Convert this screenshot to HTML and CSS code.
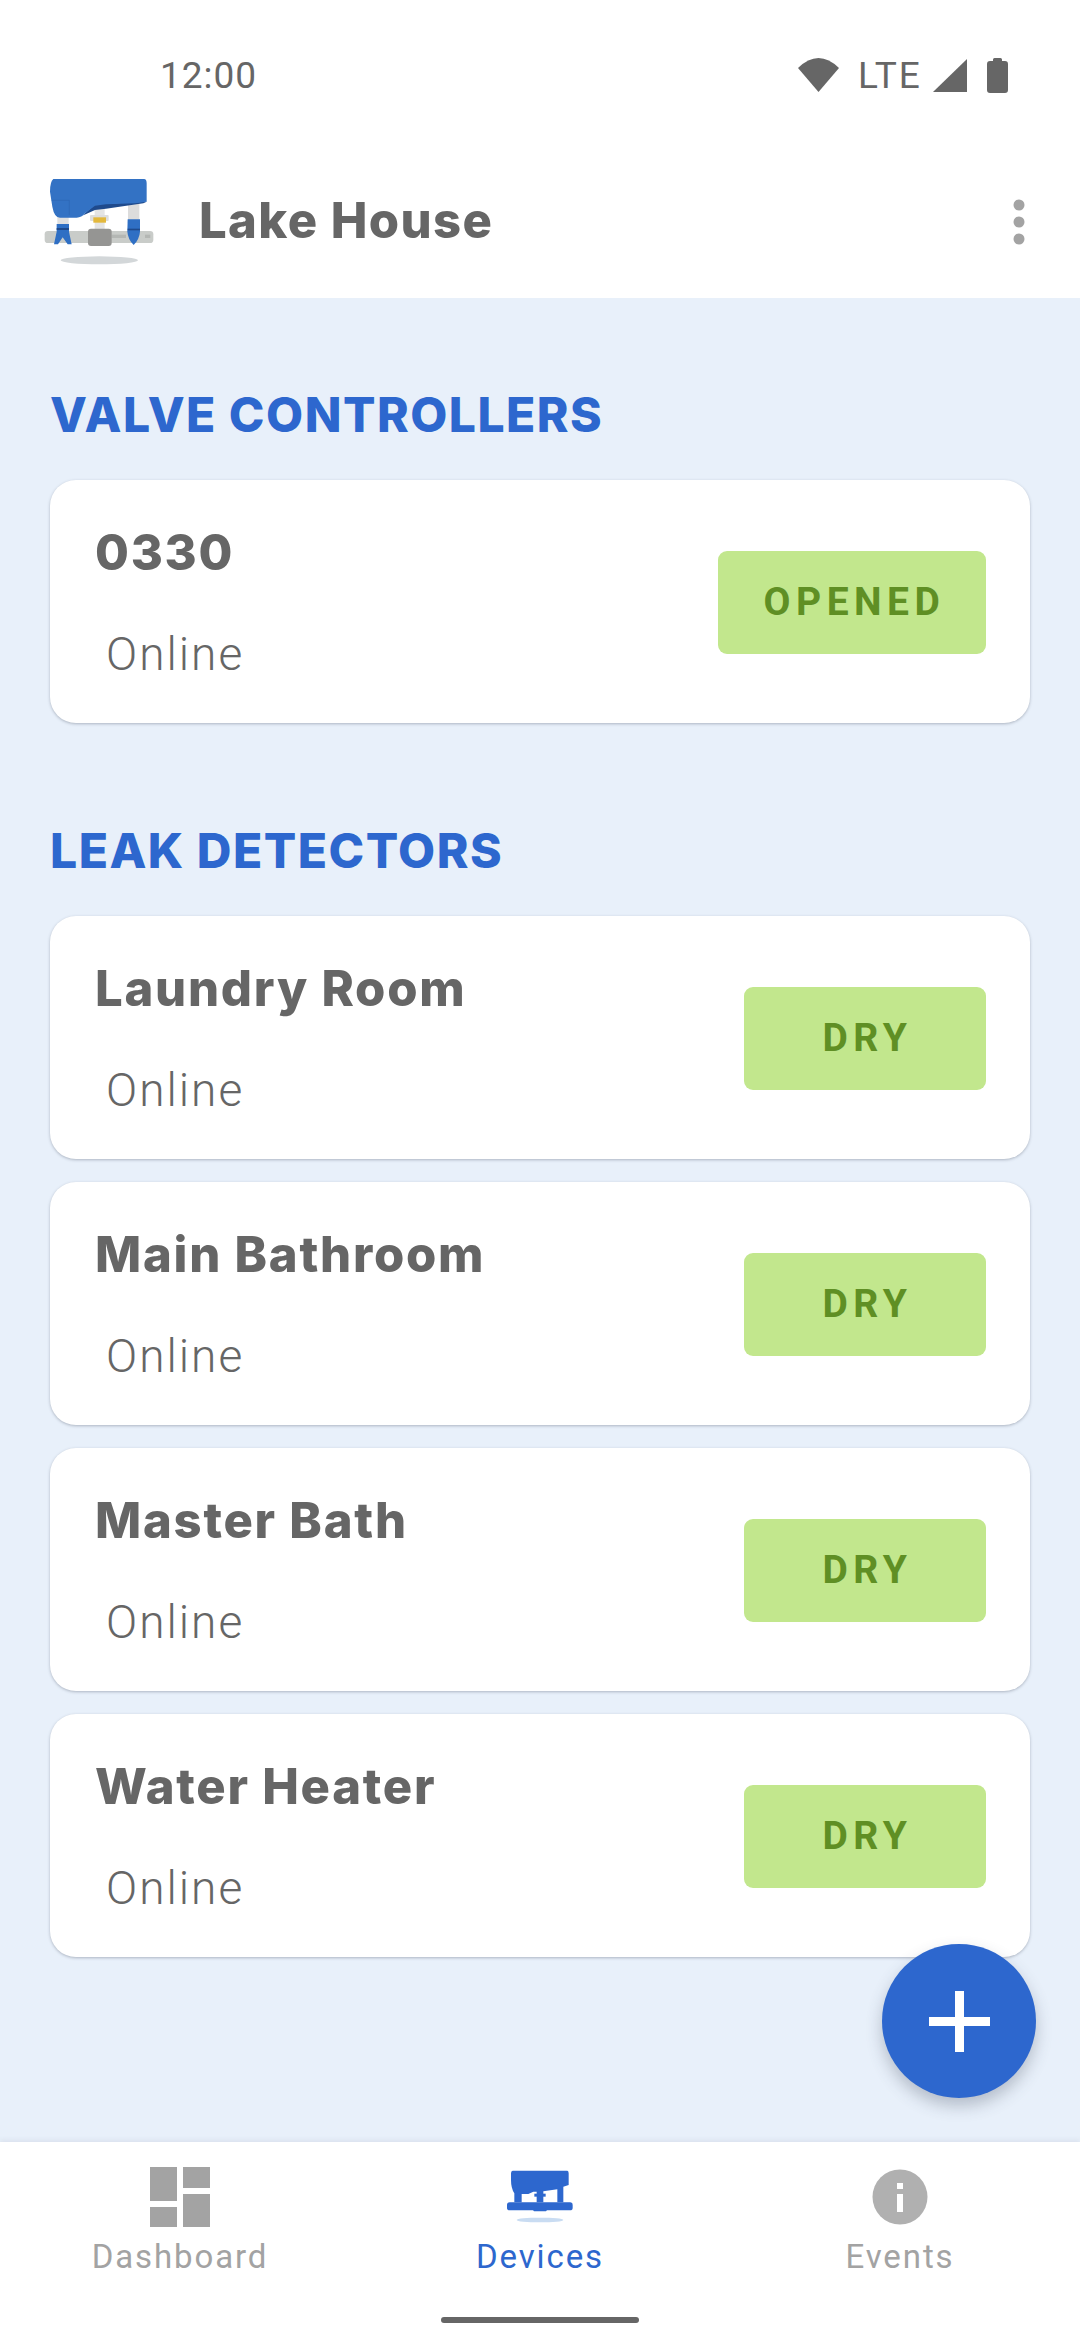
FILE: index.html
```html
<!DOCTYPE html>
<html lang="en">
<head>
<meta charset="utf-8">
<title>Lake House</title>
<link rel="stylesheet" href="styles.css">
</head>
<body>
<div class="app">
  <div class="status">
    <span class="time">12:00</span>
    <div class="status-icons">
      <svg class="ic-wifi" width="41" height="34" viewBox="0 0 41 34"><path d="M0 10Q20.500 -10 41 10L20.500 34Z" fill="#666"/></svg>
      <span class="lte">LTE</span>
      <svg class="ic-signal" width="34" height="33" viewBox="0 0 34 33"><path d="M34 0V33H0Z" fill="#666"/></svg>
      <svg class="ic-batt" width="21" height="35" viewBox="0 0 21 35"><path d="M6 3V1.500Q6 0 7.500 0H13.500Q15 0 15 1.500V3H18Q21 3 21 6V32Q21 35 18 35H3Q0 35 0 32V6Q0 3 3 3Z" fill="#666"/></svg>
    </div>
  </div>
  <header class="appbar">
    <svg class="logo" width="160" height="130" viewBox="0 0 480 390">
      <rect x="74" y="243" width="326" height="36" rx="10" fill="#c9ccc9"/>
      <rect x="275" y="254" width="43" height="10" fill="#b4b7b4"/>
      <rect x="375" y="254" width="16" height="10" fill="#b4b7b4"/>
      <rect x="112" y="195" width="34" height="40" fill="#e0e0e0"/>
      <rect x="324" y="160" width="34" height="52" fill="#dcdcdc"/>
      <rect x="224" y="165" width="30" height="75" fill="#e4e4e4"/>
      <rect x="210" y="195" width="56" height="18" rx="3" fill="#dedede"/>
      <rect x="220" y="202" width="38" height="16" fill="#e3b83c"/>
      <rect x="204" y="236" width="71" height="52" rx="9" fill="#959593"/>
      <path d="M110 222H147V245L155 283H143L128 262L114 283H102L110 245Z" fill="#2f6fc4"/>
      <rect x="110" y="234" width="37" height="6" fill="#1f4a8c"/>
      <path d="M323 208H360V245Q358 268 341 285Q324 268 322 245Z" fill="#2f6fc4"/>
      <rect x="323" y="236" width="37" height="5" fill="#1f4a8c"/>
      <path d="M195 190L225 163L380 155L370 160L258 176L225 180L190 196Z" fill="#1f4a8c"/>
      <path d="M100 87H372Q380 87 380 100V155L345 160L258 163L225 167L195 190Q185 203 170 203H120Q103 203 97 170L90 125Q90 95 100 87Z" fill="#3372c4"/>
      <path d="M95 151H148V195" fill="none" stroke="#2c66b5" stroke-width="2"/>
      <ellipse cx="238" cy="331" rx="116" ry="12" fill="#d3d7d9"/>
    </svg>
    <h1 class="place">Lake House</h1>
    <svg class="kebab" width="12" height="46" viewBox="0 0 12 46"><circle cx="6" cy="6" r="5.500"/><circle cx="6" cy="23" r="5.500"/><circle cx="6" cy="40" r="5.500"/></svg>
  </header>
  <main class="content">
    <section class="group group-first">
      <h2 class="group-title">VALVE CONTROLLERS</h2>
      <div class="card-list">
        <article class="card">
          <div class="card-text"><h3 class="name">0330</h3><p class="state">Online</p></div>
          <span class="chip chip-wide">OPENED</span>
        </article>
      </div>
    </section>
    <section class="group">
      <h2 class="group-title">LEAK DETECTORS</h2>
      <div class="card-list">
        <article class="card">
          <div class="card-text"><h3 class="name">Laundry Room</h3><p class="state">Online</p></div>
          <span class="chip">DRY</span>
        </article>
        <article class="card">
          <div class="card-text"><h3 class="name">Main Bathroom</h3><p class="state">Online</p></div>
          <span class="chip">DRY</span>
        </article>
        <article class="card">
          <div class="card-text"><h3 class="name">Master Bath</h3><p class="state">Online</p></div>
          <span class="chip">DRY</span>
        </article>
        <article class="card">
          <div class="card-text"><h3 class="name">Water Heater</h3><p class="state">Online</p></div>
          <span class="chip">DRY</span>
        </article>
      </div>
    </section>
    <button class="fab" aria-label="Add"><svg width="61" height="61" viewBox="0 0 61 61"><path d="M26 0h9v26h26v9H35v26h-9V35H0v-9h26Z" fill="#fff"/></svg></button>
  </main>
  <nav class="nav">
    <div class="tabs">
      <div class="tab">
        <svg class="tab-icon" width="62" height="62" viewBox="0 0 62 62" fill="#a3a3a3"><rect x="1" y="1" width="27" height="34"/><rect x="34" y="1" width="27" height="21"/><rect x="1" y="41" width="27" height="20"/><rect x="34" y="28" width="27" height="33"/></svg>
        <span class="tab-label">Dashboard</span>
      </div>
      <div class="tab tab-active">
        <svg class="tab-icon" width="66" height="62" viewBox="81 48 198 186">
          <path d="M98 62H262Q266 62 266 70V105L250 110V157H232V118L190 124V157H170V125H160L145 132H125V157H103V130Q93 115 93 90V70Q93 62 98 62Z" fill="#2d67ce"/>
          <rect x="81" y="157" width="197" height="24" rx="8" fill="#2d67ce"/>
          <rect x="163" y="131" width="34" height="9" fill="#2d67ce"/>
          <rect x="160" y="176" width="40" height="8" rx="3" fill="#2d67ce"/>
          <ellipse cx="180" cy="210" rx="70" ry="7" fill="#c9dcf2"/>
        </svg>
        <span class="tab-label">Devices</span>
      </div>
      <div class="tab">
        <svg class="tab-icon" width="62" height="62" viewBox="0 0 62 62"><circle cx="31" cy="31" r="27.500" fill="#b0b0b0"/><rect x="28" y="28" width="6" height="18" fill="#fff"/><rect x="28" y="17" width="6" height="6" fill="#fff"/></svg>
        <span class="tab-label">Events</span>
      </div>
    </div>
    <div class="home-bar"></div>
  </nav>
</div>
</body>
</html>
```
FILE: styles.css
```css
* { box-sizing: border-box; }
html, body { margin: 0; padding: 0; }
body { width: 1080px; height: 2340px; overflow: hidden; font-family: "Roboto", "Liberation Sans", sans-serif; color: #666; background: #fff; }
h1, h2, h3, p { margin: 0; }
.app { display: flex; flex-direction: column; height: 2340px; }

.status { height: 150px; display: flex; align-items: center; justify-content: space-between; padding: 0 72px 0 160px; }
.time { font-size: 37px; letter-spacing: 1px; color: #666; }
.status-icons { display: flex; align-items: center; }
.ic-wifi { margin-right: 19px; }
.lte { font-size: 37px; letter-spacing: 1.800px; width: 62px; margin-right: 13px; }
.ic-signal { margin-right: 20px; }

.appbar { height: 148px; display: flex; align-items: center; padding: 0 55px 0 20px; background: #fff; }
.logo { display: block; margin-bottom: 18px; flex: none; }
.place { font-family: "Inter", "Roboto", sans-serif; font-size: 49px; font-weight: 800; letter-spacing: 1.400px; color: #666; margin-left: 19px; flex: 1; margin-top: -8px; }
.kebab { fill: #a3a3a3; flex: none; margin-top: -4px; }

.content { flex: 1; position: relative; background: #e8f0fa; padding: 0 50px; }
.group { padding-top: 98px; }
.group-first { padding-top: 87px; }
.group-title { font-family: "Inter", "Roboto", sans-serif; font-size: 48px; line-height: 60px; font-weight: 800; letter-spacing: 1.500px; color: #2d67ce; margin-bottom: 35px; }
.card-list { display: flex; flex-direction: column; gap: 23px; }
.card { height: 243px; display: flex; align-items: center; justify-content: space-between; padding: 0 44px 0 45px; background: #fff; border-radius: 26px; box-shadow: 0 1px 3px rgba(60, 70, 90, 0.35); }
.name { font-family: "Inter", "Roboto", sans-serif; font-size: 49px; line-height: 60px; font-weight: 800; letter-spacing: 1.750px; color: #666; }
.state { font-size: 46px; line-height: 52px; font-weight: 300; letter-spacing: 2px; color: #666; margin: 45px 0 0 11px; }
.chip { width: 242px; height: 103px; margin-top: 1px; display: flex; align-items: center; justify-content: center; padding-left: 5px; border-radius: 9px; background: #c2e78d; color: #5f8f24; font-size: 39px; font-weight: 700; letter-spacing: 5.500px; }
.chip-wide { width: 268px; }

.fab { position: absolute; left: 882px; top: 1646px; width: 154px; height: 154px; padding: 0; border: 0; border-radius: 50%; background: #2d67ce; display: flex; align-items: center; justify-content: center; box-shadow: 0 8px 16px rgba(60, 70, 90, 0.3); }
.fab svg { display: block; }

.nav { height: 198px; display: flex; flex-direction: column; background: #fff; box-shadow: 0 -2px 5px rgba(60, 70, 90, 0.08); position: relative; }
.tabs { display: flex; flex: 1; }
.tab { flex: 1; display: flex; flex-direction: column; align-items: center; padding-top: 24px; color: #a3a3a3; }
.tab-active { color: #2d67ce; }
.tab-icon { display: block; }
.tab-label { font-size: 33px; line-height: 40px; letter-spacing: 1.900px; margin-top: 9px; }
.home-bar { width: 198px; height: 6px; border-radius: 3px; background: #666; margin: 0 auto 17px; }
```
